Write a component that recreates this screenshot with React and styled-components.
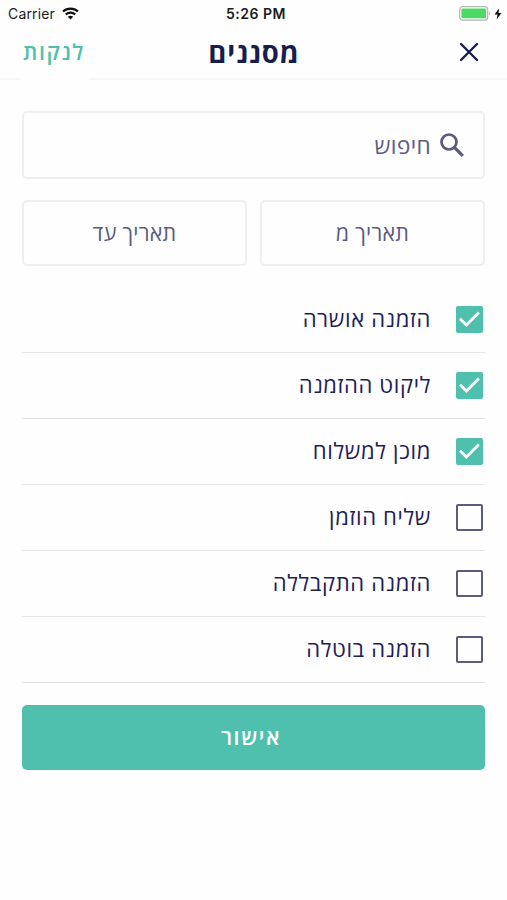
import React, { useState } from 'react'
import styled, { createGlobalStyle } from 'styled-components'

const GlobalStyle = createGlobalStyle`
  * {
    box-sizing: border-box;
  }

  body {
    margin: 0;
    background: #fefefe;
    font-family: 'Open Sans', 'DejaVu Sans', sans-serif;
  }

  button, input {
    font-family: inherit;
  }
`

const Screen = styled.div`
  display: flex;
  flex-direction: column;
  width: 507px;
  height: 900px;
  overflow: hidden;
  background: #fefefe;
`

const StatusBar = styled.div`
  display: grid;
  grid-template-columns: 1fr auto 1fr;
  align-items: center;
  height: 27px;
  padding: 0 5px 0 8px;
  font-family: Inter, 'Liberation Sans', sans-serif;
  font-size: 14px;
  color: #1c1c1c;
`

const Carrier = styled.div`
  display: flex;
  align-items: center;
  gap: 7px;
  letter-spacing: 0.15px;
`

const Clock = styled.div`
  padding-left: 2px;
  font-size: 14px;
  font-weight: 600;
  letter-spacing: 0.5px;
`

const Power = styled.div`
  display: flex;
  justify-content: flex-end;
  align-items: center;
  gap: 3px;
`

const Header = styled.header`
  display: grid;
  grid-template-columns: 80px 1fr 80px;
  align-items: center;
  height: 51px;
  padding: 0 28px 1px 23px;
`

const HeaderButton = styled.button`
  display: flex;
  justify-content: ${props => props.$align};
  padding: 0;
  border: 0;
  background: none;
  color: ${props => props.$color};
  font-size: 21.5px;
  font-weight: 600;
  letter-spacing: 1.6px;
  line-height: 28px;
  white-space: nowrap;
`

const Title = styled.h1`
  margin: 0;
  padding: 2px 0 0 6px;
  text-align: center;
  font-size: 27.5px;
  font-weight: 700;
  letter-spacing: 1px;
  line-height: 34px;
  color: #181c4e;
`

const HeaderLine = styled.div`
  display: flex;
  justify-content: space-between;
  height: 2px;

  &::before, &::after {
    content: '';
    background: #f7f7f7;
  }

  &::before {
    width: 20px;
  }

  &::after {
    width: 418px;
  }
`

const Content = styled.main`
  display: flex;
  flex-direction: column;
  padding: 31px 22px 0;
`

const SearchBox = styled.label`
  display: flex;
  align-items: center;
  gap: 9px;
  height: 68px;
  padding: 0 19px;
  border: 2px solid #efefef;
  border-radius: 5px;
`

const SearchInput = styled.input`
  flex: 1;
  min-width: 0;
  padding: 0;
  border: 0;
  outline: 0;
  background: none;
  font-size: 22.5px;
  letter-spacing: 0.4px;
  color: #5b5b7e;

  &::placeholder {
    color: #5b5b7e;
    opacity: 1;
  }
`

const DateRow = styled.div`
  display: grid;
  grid-template-columns: 1fr 1fr;
  gap: 13px;
  margin-top: 21px;
`

const DateButton = styled.button`
  height: 66px;
  padding: 0 0 2px;
  border: 2px solid #efefef;
  border-radius: 5px;
  background: none;
  font-size: 21.5px;
  letter-spacing: 0.25px;
  color: #5b5b7e;
`

const StatusList = styled.ul`
  margin: 21px 0 0;
  padding: 0;
  list-style: none;
`

const StatusRow = styled.li`
  display: flex;
  align-items: center;
  gap: 25px;
  height: 66px;
  padding-right: 2px;
  border-bottom: 1px solid #e6e6e6;
  font-size: 22px;
  letter-spacing: 0.65px;
  color: #1e2157;
`

const StatusLabel = styled.span`
  padding-bottom: 3px;
`

const Checkbox = styled.span`
  display: flex;
  align-items: center;
  justify-content: center;
  width: 27px;
  height: 27px;
  border: ${props => props.$checked ? '0' : '2px solid #5b5b7e'};
  border-radius: 2px;
  background: ${props => props.$checked ? '#4ec0ad' : 'transparent'};
`

const SubmitButton = styled.button`
  height: 65px;
  margin-top: 22px;
  padding: 0 5px 2px 0;
  border: 0;
  border-radius: 5px;
  background: #4ec0ad;
  font-size: 21.5px;
  font-weight: 600;
  letter-spacing: 1.6px;
  color: #fff;
`

const WifiIcon = () => (
  <svg width="17" height="13" viewBox="0 0 17 13" fill="none" stroke="#111" strokeWidth="2.1">
    <path d="M1 4.6C5.1.6 11.9.6 16 4.6" />
    <path d="M3.7 7.5C6.4 5 10.6 5 13.3 7.5" />
    <path d="M8.5 12.4 5.8 9.7C7.3 8.4 9.7 8.4 11.2 9.7Z" fill="#111" stroke="none" />
  </svg>
)

const BatteryIcon = () => (
  <svg width="32" height="15" viewBox="0 0 32 15">
    <rect x="0.7" y="0.7" width="28" height="13.4" rx="3" fill="#fff" stroke="#b4b4b4" strokeWidth="1.2" />
    <rect x="2.4" y="2.5" width="24.6" height="9.8" rx="1" fill="#4cd964" />
    <path d="M30.2 5.2C31.7 5.9 31.7 8.9 30.2 9.6Z" fill="#b4b4b4" />
  </svg>
)

const BoltIcon = () => (
  <svg width="8" height="12" viewBox="0 0 8 12">
    <path d="M5 .5.5 6.6H3.5L2.6 11.5 7.5 5H4.6Z" fill="#111" />
  </svg>
)

const CloseIcon = () => (
  <svg width="20" height="20" viewBox="0 0 20 20" fill="none" stroke="#181c4e" strokeWidth="2.4" strokeLinecap="round">
    <path d="M2 2 18 18M18 2 2 18" />
  </svg>
)

const SearchIcon = () => (
  <svg width="24" height="24" viewBox="0 0 24 24" fill="none" stroke="#5b5b7e">
    <circle cx="9" cy="9" r="7.5" strokeWidth="2.7" />
    <path d="M14.4 14.4 22.8 22.8" strokeWidth="3.2" />
  </svg>
)

const CheckIcon = () => (
  <svg width="27" height="27" viewBox="0 0 27 27" fill="none" stroke="#fff" strokeWidth="2.8">
    <path d="M4 12.8 10.4 19.1 22.8 6.6" />
  </svg>
)

const initialStatuses = [
  { label: 'הזמנה אושרה', checked: true },
  { label: 'ליקוט ההזמנה', checked: true },
  { label: 'מוכן למשלוח', checked: true },
  { label: 'שליח הוזמן', checked: false },
  { label: 'הזמנה התקבללה', checked: false },
  { label: 'הזמנה בוטלה', checked: false }
]

const App = () => {
  const [statuses, setStatuses] = useState(initialStatuses)

  const toggle = index => {
    setStatuses(statuses.map((status, i) => (
      i === index ? { ...status, checked: !status.checked } : status
    )))
  }

  const clear = () => {
    setStatuses(statuses.map(status => ({ ...status, checked: false })))
  }

  return (
    <Screen>
      <GlobalStyle />
      <StatusBar>
        <Carrier>
          Carrier
          <WifiIcon />
        </Carrier>
        <Clock>5:26 PM</Clock>
        <Power>
          <BatteryIcon />
          <BoltIcon />
        </Power>
      </StatusBar>

      <Header>
        <HeaderButton $align="flex-start" $color="#4ec0ad" onClick={clear}>לנקות</HeaderButton>
        <Title>מסננים</Title>
        <HeaderButton $align="flex-end" $color="#181c4e" aria-label="סגור">
          <CloseIcon />
        </HeaderButton>
      </Header>
      <HeaderLine />

      <Content dir="rtl">
        <SearchBox>
          <SearchIcon />
          <SearchInput placeholder="חיפוש" />
        </SearchBox>

        <DateRow>
          <DateButton>תאריך מ</DateButton>
          <DateButton>תאריך עד</DateButton>
        </DateRow>

        <StatusList>
          {statuses.map((status, i) => (
            <StatusRow key={status.label} onClick={() => toggle(i)}>
              <Checkbox $checked={status.checked}>
                {status.checked && <CheckIcon />}
              </Checkbox>
              <StatusLabel>{status.label}</StatusLabel>
            </StatusRow>
          ))}
        </StatusList>

        <SubmitButton>אישור</SubmitButton>
      </Content>
    </Screen>
  )
}

export default App
